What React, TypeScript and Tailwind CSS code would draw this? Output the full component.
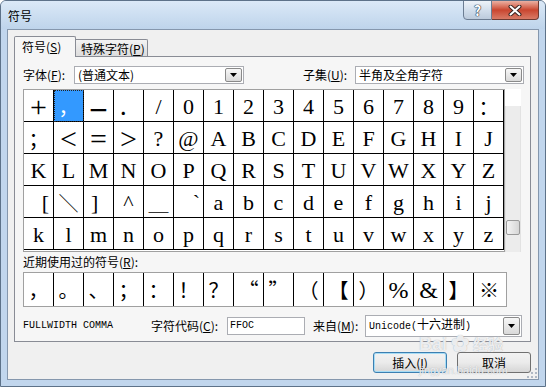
import React from 'react';

type Cell = { t: string; c?: string; j?: string };

const SERIF = "[font-family:'Liberation_Serif',serif] text-[22px]";
const BIG = "[font-family:'Liberation_Serif',serif] text-[30px]";
const CJK = "[font-family:'Noto_Sans_CJK_SC',sans-serif] text-[20px]";
const MONO = "[font-family:'Liberation_Mono','Noto_Sans_CJK_SC',monospace] text-[10px]";
const MID = 'items-center justify-center';

const ser = (t: string): Cell => ({ t, c: SERIF });

const grid: Cell[][] = [
  [
    { t: '+', c: BIG },
    {
      t: '，',
      c: CJK + ' text-white',
      j: 'items-center justify-center bg-[#3399ff] outline-1 outline-dotted outline-[#222] -outline-offset-1',
    },
    { t: '—', c: "[font-family:'Noto_Sans_CJK_SC',sans-serif] text-[19px] font-black" },
    { t: '．', c: CJK },
    ser('/'),
    ...'0123456789'.split('').map((d) => ser(d)),
    { t: '：', c: CJK },
  ],
  [
    { t: '；', c: CJK },
    { t: '<', c: BIG },
    { t: '=', c: BIG },
    { t: '>', c: BIG },
    ser('?'),
    ser('@'),
    ...'ABCDEFGHIJ'.split('').map((d) => ser(d)),
  ],
  'KLMNOPQRSTUVWXYZ'.split('').map((d) => ser(d)),
  [
    { t: '[', c: SERIF, j: 'items-center justify-end pr-[4px]' },
    { t: '＼', c: CJK + ' font-light' },
    { t: ']', c: SERIF, j: 'items-center justify-start pl-[7px]' },
    { t: '^', c: SERIF, j: 'items-start justify-center pt-[6px]' },
    { t: '＿', c: CJK },
    { t: '`', c: SERIF, j: 'items-start justify-end pr-[3px] pt-[6px]' },
    ...'abcdefghij'.split('').map((d) => ser(d)),
  ],
  'klmnopqrstuvwxyz'.split('').map((d) => ser(d)),
];

const recent: Cell[] = [
  { t: '，' },
  { t: '。' },
  { t: '、' },
  { t: '；' },
  { t: '：' },
  { t: '！' },
  { t: '？' },
  { t: '“' },
  { t: '”' },
  { t: '（' },
  { t: '【' },
  { t: '）' },
  { t: '%', c: "[font-family:'Liberation_Serif',serif] text-[24px]" },
  { t: '&', c: "[font-family:'Liberation_Serif',serif] text-[24px]" },
  { t: '】' },
  { t: '※' },
];

function Arrow() {
  return (
    <div className="flex h-full w-[17px] items-center justify-center rounded-[2px] border border-[#8a8a8a] bg-linear-to-b from-[#f7f7f7] to-[#d9d9d9]">
      <svg width="7" height="4" viewBox="0 0 7 4">
        <path d="M0 0h7L3.5 4z" fill="#000" />
      </svg>
    </div>
  );
}

function Combo({ className, children }: { className: string; children: React.ReactNode }) {
  return (
    <div className={`flex border border-[#abadb3] bg-white p-px ${className}`}>
      <div className="flex flex-1 items-center pl-[2px]">{children}</div>
      <Arrow />
    </div>
  );
}

const Key = ({ k }: { k: string }) => (
  <>
    (<span className="underline">{k}</span>)
  </>
);

export default function App() {
  return (
    <div className="relative h-[387px] w-[546px] overflow-hidden rounded-t-[6px] border border-[#5d7289] bg-[#c1d6ed] text-[12px] leading-[16px] text-black [font-family:'Noto_Sans_CJK_SC',sans-serif]">
      {/* caption */}
      <div className="flex h-[28px] items-start justify-between bg-linear-to-b from-[#dbe9f7] to-[#bed4eb]">
        <div className="pl-[7px] pt-[7px]">符号</div>
        <div className="-mt-px mr-[6px] flex">
          <div className="flex h-[20px] w-[29px] items-center justify-center rounded-bl-[4px] border border-[#6c7d92] bg-linear-to-b from-[#eef3f9] via-[#d3dfec] to-[#bccbdc] text-[14px] font-bold text-white [text-shadow:0_0_1px_#1f2d40,0_0_1px_#1f2d40,0_0_1px_#1f2d40]">
            ?
          </div>
          <div className="flex h-[20px] w-[47px] items-center justify-center rounded-br-[4px] border border-l-0 border-[#6e3a32] bg-linear-to-b from-[#eab0a2] via-[#c9452f] to-[#d87a66]">
            <svg width="14" height="11" viewBox="0 0 14 11">
              <path d="M2.5 1.5l9 8M11.5 1.5l-9 8" stroke="#3a2420" strokeWidth="4" strokeLinecap="round" />
              <path d="M2.5 1.5l9 8M11.5 1.5l-9 8" stroke="#fff" strokeWidth="2" strokeLinecap="round" />
            </svg>
          </div>
        </div>
      </div>

      {/* client area */}
      <div className="relative ml-[6px] h-[351px] w-[532px] border border-[#8597ad] bg-[#f0f0f0] pl-[6px] pt-[6px]">
        {/* tabs */}
        <div className="flex h-[20px] items-end">
          <div className="relative z-10 -mb-px h-[21px] w-[62px] rounded-t-[2px] border border-b-0 border-[#898c95] bg-[#f6f6f6] pl-[7px] pt-[2px]">
            符号<Key k="S" />
          </div>
          <div className="h-[17px] w-[72px] rounded-tr-[2px] border border-l-0 border-b-0 border-[#898c95] bg-linear-to-b from-[#f3f3f3] to-[#dcdcdc] pl-[5px] pt-px">
            特殊字符<Key k="P" />
          </div>
        </div>

        {/* tab page */}
        <div className="h-[286px] w-[517px] border border-[#898c95] bg-[#f6f6f6] pl-[8px]">
          <div className="mt-[9px] flex h-[18px] items-center">
            <div className="w-[51px]">
              字体<Key k="F" />:
            </div>
            <Combo className="h-[18px] w-[170px]">(普通文本)</Combo>
            <div className="ml-[59px] w-[52px]">
              子集<Key k="U" />:
            </div>
            <Combo className="h-[18px] w-[169px]">半角及全角字符</Combo>
          </div>

          {/* symbol grid */}
          <div className="mt-[5px] flex">
            <div className="w-[482px] border border-[#a0a0a0] bg-white pb-px">
              {grid.map((row, r) => (
                <div key={r} className="flex">
                  {row.map((cell, i) => (
                    <div
                      key={i}
                      className={`flex h-[32px] w-[30px] shrink-0 border-r border-b border-black pt-[3px] leading-none ${cell.j ?? MID}`}
                    >
                      <span className={cell.c}>{cell.t}</span>
                    </div>
                  ))}
                </div>
              ))}
            </div>
            <div className="flex h-[163px] w-[16px] flex-col">
              <div className="h-[17px] bg-white" />
              <div className="flex flex-1 flex-col border-x border-[#e2e2e2] bg-[#ececec]">
                <div className="h-[114px]" />
                <div className="h-[15px] rounded-[2px] border border-[#999] bg-linear-to-r from-[#f4f4f4] to-[#d6d6d6]" />
              </div>
            </div>
          </div>

          <div className="flex h-[20px] items-center">
            近期使用过的符号<Key k="R" />:
          </div>

          {/* recently used */}
          <div className="flex h-[35px] w-[484px] border border-[#a0a0a0] bg-white">
            {recent.map((cell, i) => (
              <div
                key={i}
                className={`flex h-[33px] w-[30px] shrink-0 items-center justify-center leading-none ${i < 15 ? 'border-r border-black' : ''}`}
              >
                <span className={cell.c ?? CJK}>{cell.t}</span>
              </div>
            ))}
          </div>

          <div className="mt-[8px] flex h-[22px] items-center">
            <div className={`w-[128px] ${MONO}`}>FULLWIDTH COMMA</div>
            <div className="w-[76px]">
              字符代码<Key k="C" />:
            </div>
            <div className={`flex h-[18px] w-[78px] items-center border border-[#abadb3] bg-white pl-[2px] ${MONO}`}>
              FFOC
            </div>
            <div className="ml-[8px] w-[52px]">
              来自<Key k="M" />:
            </div>
            <Combo className="h-[22px] w-[157px]">
              <span className={MONO}>
                Unicode(<span className="text-[12px]">十六进制</span>)
              </span>
            </Combo>
          </div>
        </div>

        {/* buttons */}
        <div className="mt-[10px] flex justify-end gap-[10px] pr-[7px]">
          <button className="flex h-[21px] w-[74px] items-center justify-center rounded-[3px] border border-[#3c7fb1] bg-linear-to-b from-[#f2f2f2] via-[#ebebeb] to-[#d6d6d6] shadow-[inset_0_0_0_1px_#a6dcf5]">
            插入<Key k="I" />
          </button>
          <button className="flex h-[21px] w-[74px] items-center justify-center rounded-[3px] border border-[#707070] bg-linear-to-b from-[#f2f2f2] via-[#ebebeb] to-[#d6d6d6]">
            取消
          </button>
        </div>

        {/* size grip */}
        <svg className="absolute right-px bottom-px" width="11" height="11" viewBox="0 0 11 11">
          {[
            [9, 1],
            [9, 5],
            [5, 5],
            [9, 9],
            [5, 9],
            [1, 9],
          ].map(([x, y], i) => (
            <rect key={i} x={x} y={y} width="2" height="2" fill="#b0b8c4" />
          ))}
        </svg>
      </div>

      {/* watermark */}
      <div className="pointer-events-none absolute top-[333px] left-[418px] text-white/80 [text-shadow:0_0_1px_#9aa0a8]">
        <div className="flex items-end gap-[4px] text-[18px] leading-[20px] font-bold [font-family:'Liberation_Sans',sans-serif]">
          <span>Bai</span>
          <span className="text-[22px]">✿</span>
          <span className="[font-family:'Noto_Sans_CJK_SC',sans-serif] text-[15px]">经验</span>
        </div>
        <div className="mt-[10px] text-[11px] leading-[12px] [font-family:'Liberation_Sans',sans-serif]">jingyan.baidu.com</div>
      </div>
    </div>
  );
}
